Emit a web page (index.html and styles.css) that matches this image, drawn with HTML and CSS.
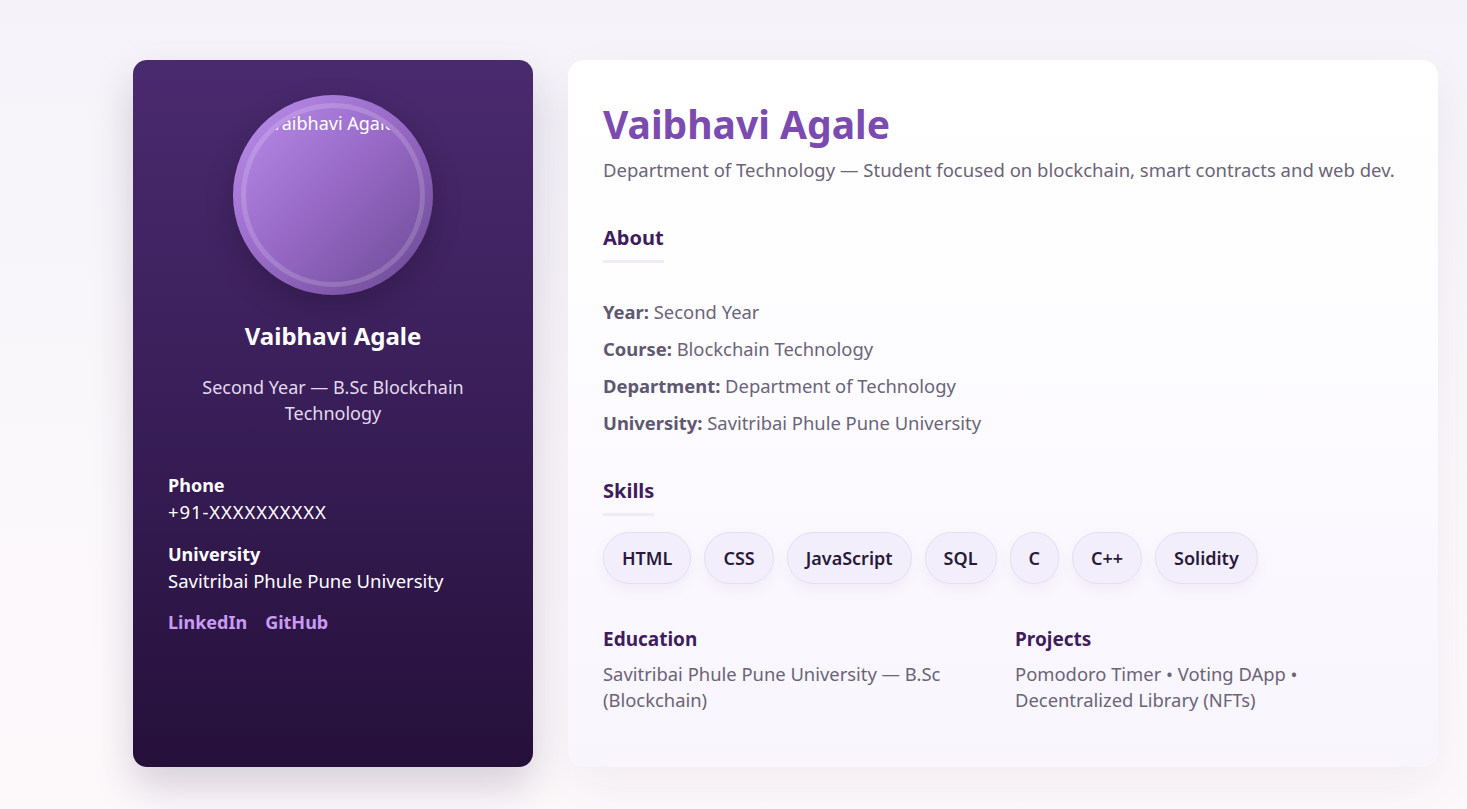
FILE: index.html
```html
<!DOCTYPE html>
<html lang="en">
<head>
<meta charset="utf-8">
<title>Vaibhavi Agale</title>
<link rel="stylesheet" href="styles.css">
</head>
<body>
<main class="page">
  <aside class="side">
    <div class="avatar">
      <div class="avatar-inner"><span class="alt">Vaibhavi Agale</span></div>
    </div>
    <h2 class="side-name">Vaibhavi Agale</h2>
    <p class="side-sub">Second Year — B.Sc Blockchain Technology</p>
    <div class="contact">
      <div class="c-label">Phone</div>
      <div class="c-value phone">+91-XXXXXXXXXX</div>
    </div>
    <div class="contact">
      <div class="c-label">University</div>
      <div class="c-value">Savitribai Phule Pune University</div>
    </div>
    <div class="links">
      <a href="#">LinkedIn</a>
      <a href="#">GitHub</a>
    </div>
  </aside>
  <section class="main">
    <h1 class="title">Vaibhavi Agale</h1>
    <p class="lead">Department of Technology — Student focused on blockchain, smart contracts and web dev.</p>
    <h3 class="sec">About</h3>
    <ul class="about">
      <li><b>Year:</b> Second Year</li>
      <li><b>Course:</b> Blockchain Technology</li>
      <li><b>Department:</b> Department of Technology</li>
      <li><b>University:</b> Savitribai Phule Pune University</li>
    </ul>
    <h3 class="sec">Skills</h3>
    <div class="chips">
      <span class="chip">HTML</span>
      <span class="chip">CSS</span>
      <span class="chip">JavaScript</span>
      <span class="chip">SQL</span>
      <span class="chip">C</span>
      <span class="chip">C++</span>
      <span class="chip">Solidity</span>
    </div>
    <div class="cols">
      <div>
        <h4 class="col-h">Education</h4>
        <p class="col-p">Savitribai Phule Pune University — B.Sc (Blockchain)</p>
      </div>
      <div>
        <h4 class="col-h">Projects</h4>
        <p class="col-p">Pomodoro Timer • Voting DApp • Decentralized Library (NFTs)</p>
      </div>
    </div>
  </section>
</main>
</body>
</html>
```
FILE: styles.css
```css
* { box-sizing: border-box; }
html, body { margin: 0; height: 100%; }
body {
  font-family: "Noto Sans", "Open Sans", sans-serif;
  background: linear-gradient(180deg, #f5f2f9 0%, #fbf8fb 60%, #fdf9fb 100%);
  color: #6b6478;
}
.page {
  display: grid;
  grid-template-columns: 400px 870px;
  gap: 35px;
  padding: 60px 0 0 133px;
  align-items: stretch;
}
.side {
  height: 707px;
  border-radius: 14px;
  background: linear-gradient(180deg, #4a2a6e 0%, #3a1f5a 45%, #25103a 100%);
  box-shadow: 0 20px 40px rgba(40, 20, 60, 0.18);
  padding: 35px 35px;
  color: #fff;
}
.avatar {
  width: 200px; height: 200px;
  margin: 0 auto;
  border-radius: 50%;
  padding: 8px;
  background: linear-gradient(135deg, #bd8fee 0%, #9a6cc9 45%, #6a4892 100%);
  box-shadow: 0 10px 30px rgba(0,0,0,0.2);
}
.avatar-inner {
  width: 184px; height: 184px;
  border-radius: 50%;
  border: 5px solid rgba(255,255,255,0.16);
  overflow: hidden;
  text-align: center;
  padding-top: 3px;
}
.alt {
  display: block;
  white-space: nowrap;
  font-size: 18px;
  line-height: 24px;
  color: #fff;
}
.side-name {
  margin: 21px 0 0;
  text-align: center;
  font-size: 24px;
  line-height: 40px;
  font-weight: 700;
  color: #fff;
}
.side-sub {
  margin: 18px auto 0;
  width: 290px;
  text-align: center;
  font-size: 18px;
  line-height: 26px;
  color: #e4d9ef;
}
.side-sub + .contact { margin-top: 46px; }
.contact + .contact { margin-top: 15px; }
.c-label { font-size: 18px; font-weight: 700; line-height: 26px; color: #fff; }
.c-value { font-size: 18.5px; line-height: 28px; color: #fff; }
.c-value.phone { letter-spacing: 0.9px; }
.links { margin-top: 14px; display: flex; gap: 18px; }
.links a { color: #c99cf3; font-weight: 700; font-size: 18px; text-decoration: none; line-height: 26px; }

.main {
  height: 707px;
  border-radius: 16px;
  background: linear-gradient(180deg, #ffffff 0%, #fdfcff 40%, #f8f5fd 100%);
  box-shadow: 0 20px 50px rgba(60, 30, 90, 0.06);
  padding: 38px 35px 35px;
}
.title {
  margin: 0;
  font-size: 39px;
  line-height: 52px;
  font-weight: 700;
  color: #7b4bb0;
}
.lead {
  margin: 6px 0 0;
  font-size: 18.5px;
  line-height: 28px;
  color: #6b6478;
}
.sec {
  display: inline-block;
  margin: 40px 0 0;
  font-size: 20px;
  line-height: 28px;
  font-weight: 700;
  color: #3f1d5c;
  padding-bottom: 8px;
  border-bottom: 3px solid #f0ecf6;
}
.about {
  list-style: none;
  margin: 36px 0 0;
  padding: 0;
}
.about li {
  font-size: 18.4px;
  line-height: 26px;
  margin-bottom: 11px;
  color: #6b6478;
}
.about b { color: #5e5870; }
.about + .sec { margin-top: 30px; }
.chips {
  display: flex;
  flex-wrap: wrap;
  gap: 13px;
  margin-top: 16px;
}
.chip {
  height: 52px;
  padding: 0 18px;
  display: inline-flex;
  align-items: center;
  border-radius: 26px;
  background: #f3eefc;
  border: 1px solid #e7ddf6;
  box-shadow: 0 6px 14px rgba(90, 50, 140, 0.06);
  font-size: 18px;
  font-weight: 600;
  color: #2a1a3a;
}
.cols {
  display: grid;
  grid-template-columns: 1fr 1fr;
  gap: 24px;
  margin-top: 41px;
}
.col-h {
  margin: 0;
  font-size: 19px;
  line-height: 28px;
  font-weight: 700;
  color: #3f1d5c;
}
.col-p {
  margin: 8px 0 0;
  font-size: 18.4px;
  line-height: 26px;
  color: #6b6478;
  max-width: 345px;
}
```
